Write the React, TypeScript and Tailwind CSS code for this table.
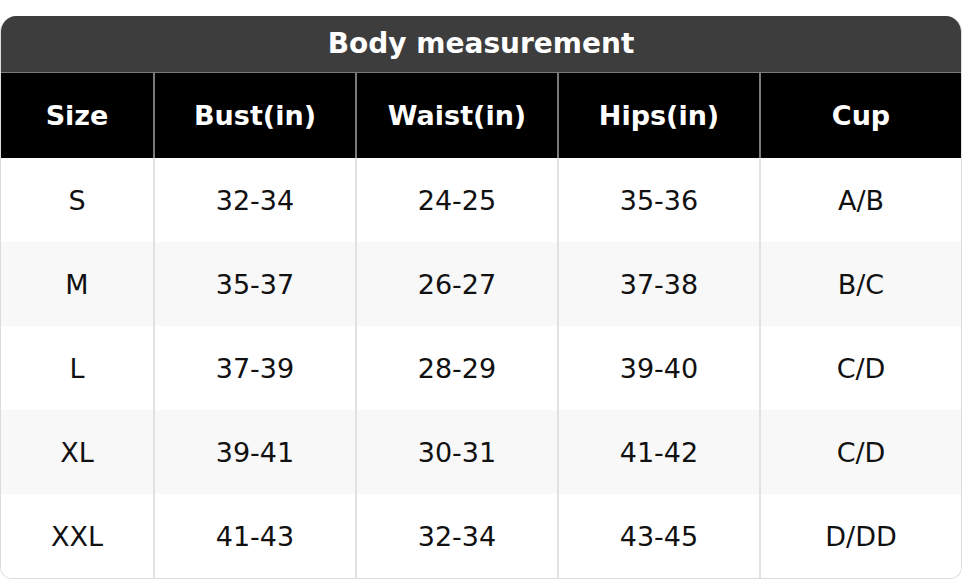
import React from "react";

const headers = ["Size", "Bust(in)", "Waist(in)", "Hips(in)", "Cup"];
const rows = [
  ["S", "32-34", "24-25", "35-36", "A/B"],
  ["M", "35-37", "26-27", "37-38", "B/C"],
  ["L", "37-39", "28-29", "39-40", "C/D"],
  ["XL", "39-41", "30-31", "41-42", "C/D"],
  ["XXL", "41-43", "32-34", "43-45", "D/DD"],
];

export default function App() {
  return (
    <div className="w-[962px] h-[580px] bg-white pt-[16px]" style={{ fontFamily: '"DejaVu Sans", sans-serif' }}>
      <div className="border border-[#dcdcdc] border-t-0 rounded-t-[16px] rounded-b-[12px] overflow-hidden">
        <div className="h-[57px] bg-[#3d3d3d] flex items-center justify-center text-white font-bold text-[28px] border-b border-[#7a7a7a]">
          Body measurement
        </div>
        <div className="grid grid-cols-[154px_202px_202px_202px_1fr] bg-black h-[85px]">
          {headers.map((h, i) => (
            <div
              key={h}
              className={`flex items-center justify-center pt-[2px] text-white font-bold text-[27px] ${i < 4 ? "border-r-2 border-[#7a7a7a]" : ""}`}
            >
              {h}
            </div>
          ))}
        </div>
        {rows.map((r, ri) => (
          <div
            key={ri}
            className={`grid grid-cols-[154px_202px_202px_202px_1fr] h-[84px] ${ri % 2 === 1 ? "bg-[#f8f8f8]" : "bg-white"}`}
          >
            {r.map((c, i) => (
              <div
                key={i}
                className={`flex items-center justify-center pt-[2px] text-[#111111] text-[27px] ${i < 4 ? "border-r-2 border-[#e2e2e2]" : ""}`}
              >
                {c}
              </div>
            ))}
          </div>
        ))}
      </div>
    </div>
  );
}
